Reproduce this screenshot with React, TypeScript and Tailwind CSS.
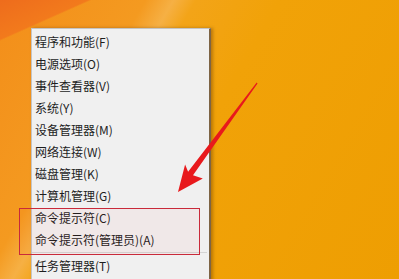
const items = [
  "程序和功能(F)",
  "电源选项(O)",
  "事件查看器(V)",
  "系统(Y)",
  "设备管理器(M)",
  "网络连接(W)",
  "磁盘管理(K)",
  "计算机管理(G)",
  "命令提示符(C)",
  "命令提示符(管理员)(A)",
];

export default function App() {
  return (
    <div
      className="relative w-[399px] h-[279px] overflow-hidden bg-[linear-gradient(156deg,#ee6c1c_0%,#f27a1c_8.6%,transparent_9%),linear-gradient(120deg,#f38e1a_0%,#f49a20_26%,#f6b044_31%,#f3a418_35%,#f1a208_50%,#ee9e02_100%)]"
      style={{ fontFamily: '"Noto Sans CJK SC", "Noto Sans", sans-serif' }}
    >
      {/* context menu */}
      <div className="ml-[31px] mt-[28px] w-[180px] h-[260px] flex flex-col bg-[#f0f0f0] border-l border-t border-[#c4c4c4] border-r-2 border-r-[#7d6445] shadow-[2px_0_3px_rgba(80,40,0,0.35)] pt-[2px]">
        {items.map((t) => (
          <div key={t} className="h-[22px] flex items-center pl-[3px] text-[12px] text-[#1e1e1e]">
            {t}
          </div>
        ))}
        <div className="mt-[1px] mr-[2px] h-px bg-[#d4d4d4]" />
        <div className="mt-[2px] h-[22px] flex items-center pl-[3px] text-[12px] text-[#1e1e1e]">
          任务管理器(T)
        </div>
      </div>

      {/* red highlight box */}
      <div className="absolute left-[19px] top-[208px] w-[181px] h-[47px] border border-[#c92a3a] bg-[rgba(255,0,0,0.03)]" />

      {/* red arrow */}
      <svg className="absolute left-0 top-0" width="399" height="279" viewBox="0 0 399 279">
        <polygon
          points="257.5,83.4 193,175.3 202.8,178.6 178,192 185.1,164.6 188.1,171.8 256.7,82.6"
          fill="#e8191c"
        />
      </svg>
    </div>
  );
}
